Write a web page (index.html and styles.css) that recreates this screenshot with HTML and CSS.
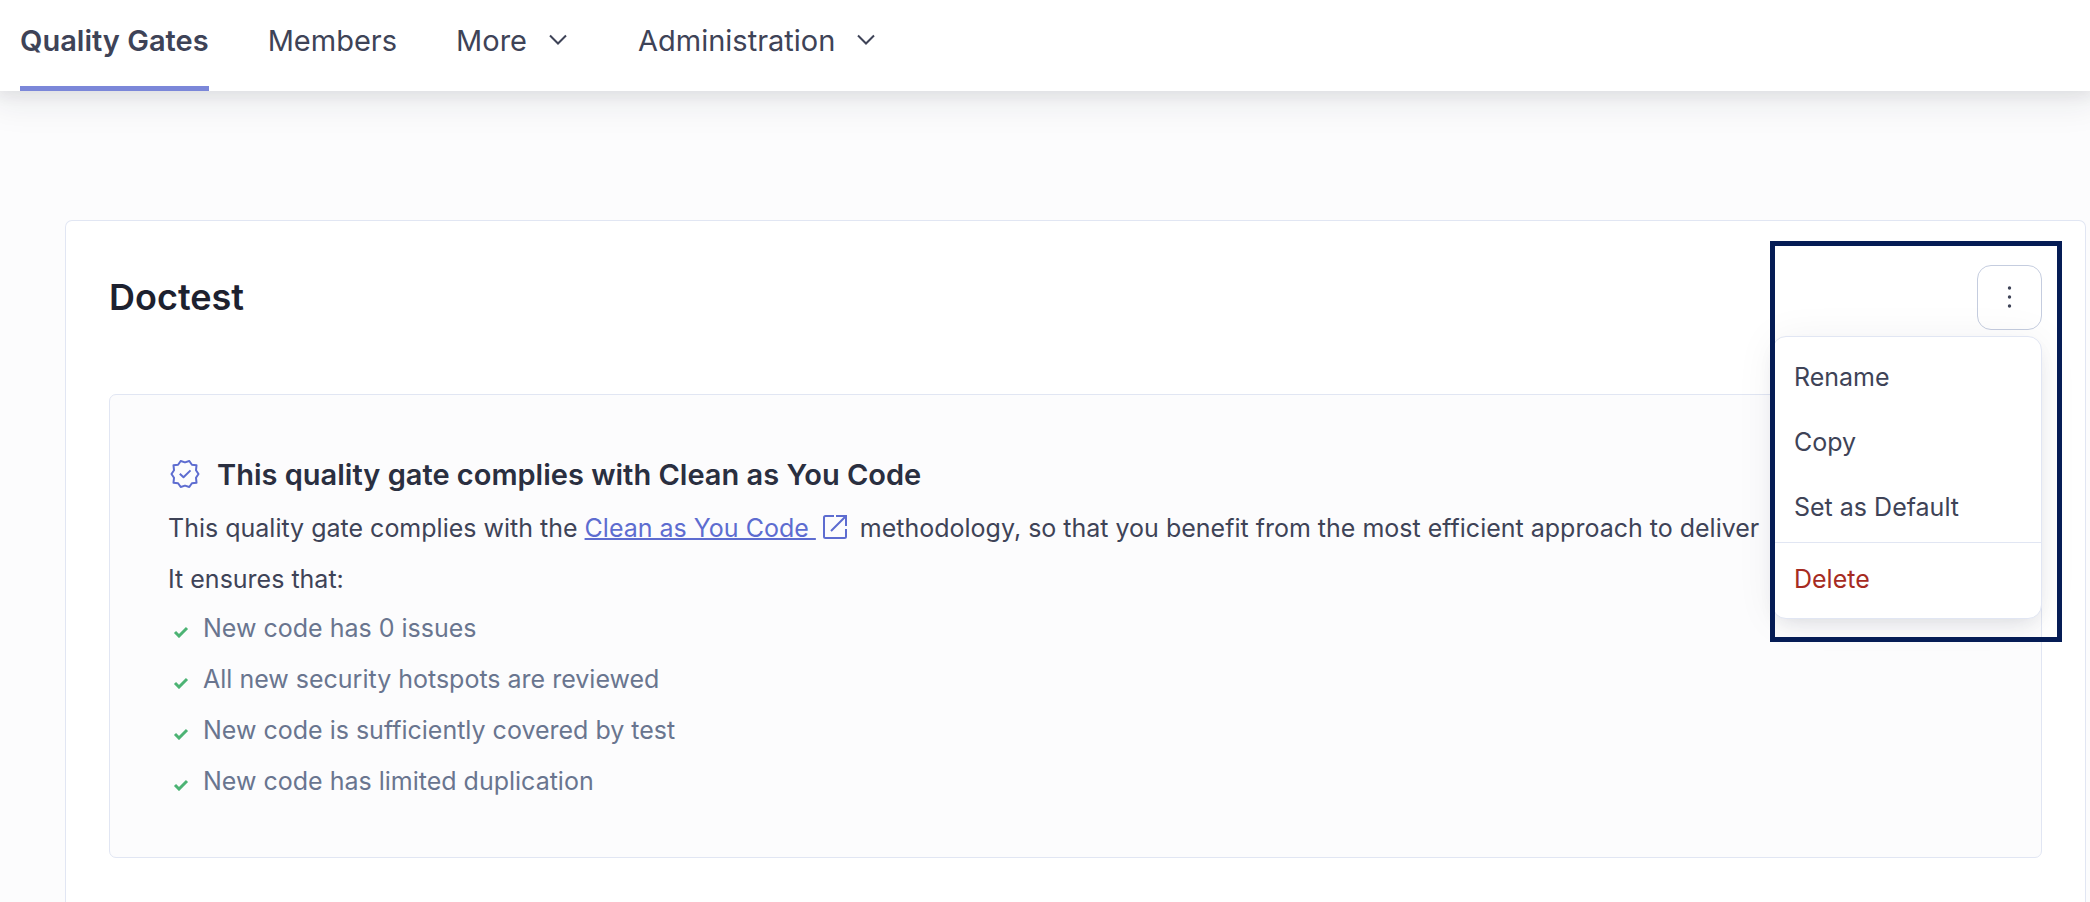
FILE: index.html
```
<!DOCTYPE html>
<html lang="en">
<head>
<meta charset="utf-8">
<title>Quality Gates</title>
<link rel="stylesheet" href="styles.css">
</head>
<body>
<nav class="navbar">
  <a class="nav-item active" href="#">Quality Gates</a>
  <a class="nav-item" href="#">Members</a>
  <button class="nav-item" type="button">More
    <svg class="chevron" viewBox="0 0 30 30" aria-hidden="true"><path d="M7 10.500 15 18.500l8-8"/></svg>
  </button>
  <button class="nav-item" type="button">Administration
    <svg class="chevron" viewBox="0 0 30 30" aria-hidden="true"><path d="M7 10.500 15 18.500l8-8"/></svg>
  </button>
</nav>
<main class="page">
  <section class="card">
    <header class="card-header">
      <h1 class="card-title">Doctest</h1>
      <div class="actions">
        <button class="menu-button" type="button" aria-label="Actions">
          <svg class="dots" viewBox="0 0 24 24" aria-hidden="true"><circle cx="11.500" cy="2" r="1.7"/><circle cx="11.500" cy="11" r="1.7"/><circle cx="11.500" cy="20" r="1.7"/></svg>
        </button>
        <div class="menu">
          <button class="menu-item" type="button">Rename</button>
          <button class="menu-item" type="button">Copy</button>
          <button class="menu-item" type="button">Set as Default</button>
          <hr class="menu-divider">
          <button class="menu-item danger" type="button">Delete</button>
        </div>
        <div class="highlight"></div>
      </div>
    </header>
    <div class="panel">
      <h2 class="panel-title">
        <svg class="seal" viewBox="0 0 30 30" aria-hidden="true"><path d="M28.500 14 26 10.200 26.500 5.300 21.900 4.700 19.300 1 15 2.400 10.700 1 8.100 4.700 3.500 5.300 4 10.200 1.500 14 4 17.800 3.500 22.700 8.100 23.300 10.700 27 15 25.600 19.300 27 21.900 23.300 26.500 22.700 26 17.800Z"/><path d="m9.800 13.800 3.700 3.400 7-6.800"/></svg>
        This quality gate complies with Clean as You Code
      </h2>
      <p class="text">This quality gate complies with the <a class="link" href="#">Clean as You Code&nbsp;</a><svg class="external" viewBox="0 0 26 26" aria-hidden="true"><path d="M12 2H3.500Q2 2 2 3.500v19Q2 24 3.500 24h19Q24 24 24 22.500V15M14 2h10v10M24 2 9 17"/></svg>methodology, so that you benefit from the most efficient approach to deliver</p>
      <p class="text">It ensures that:</p>
      <ul class="checks">
        <li class="check"><svg class="tick" viewBox="0 0 16 12" aria-hidden="true"><path d="m2 6 4 4 8-8"/></svg>New code has 0 issues</li>
        <li class="check"><svg class="tick" viewBox="0 0 16 12" aria-hidden="true"><path d="m2 6 4 4 8-8"/></svg>All new security hotspots are reviewed</li>
        <li class="check"><svg class="tick" viewBox="0 0 16 12" aria-hidden="true"><path d="m2 6 4 4 8-8"/></svg>New code is sufficiently covered by test</li>
        <li class="check"><svg class="tick" viewBox="0 0 16 12" aria-hidden="true"><path d="m2 6 4 4 8-8"/></svg>New code has limited duplication</li>
      </ul>
    </div>
  </section>
</main>
</body>
</html>
```
FILE: styles.css
```
* { box-sizing: border-box; }

body {
  margin: 0;
  height: 100vh;
  display: flex;
  flex-direction: column;
  overflow: hidden;
  background: #fcfcfd;
  color: #3e4357;
  font-family: Inter, "Liberation Sans", sans-serif;
  font-size: 25px;
}

button {
  font: inherit;
  color: inherit;
  background: none;
  border: 0;
  padding: 0;
  cursor: pointer;
}

.navbar {
  position: relative;
  flex: none;
  display: flex;
  gap: 59px;
  height: 91px;
  padding: 0 20px;
  background: #fff;
  box-shadow: 0 6px 32px 8px rgba(29, 33, 47, 0.08), 0 2px 12px 4px rgba(29, 33, 47, 0.06);
}

.nav-item {
  display: flex;
  align-items: center;
  gap: 16px;
  padding: 0 0 6px;
  border-bottom: 5px solid transparent;
  color: #3e4357;
  font-size: 29px;
  text-decoration: none;
}

.nav-item.active {
  border-color: #7b87d9;
  font-weight: 600;
}

.chevron {
  width: 30px;
  height: 30px;
  margin-right: 6px;
  fill: none;
  stroke: #3e4357;
  stroke-width: 2;
}

.page {
  flex: 1;
  display: flex;
  padding: 129px 4px 0 65px;
}

.card {
  flex: 1;
  padding: 44px 43px;
  background: #fff;
  border: 1px solid #e1e6f3;
  border-bottom: 0;
  border-radius: 7px 7px 0 0;
}

.card-header {
  display: flex;
  justify-content: space-between;
  align-items: center;
  margin-bottom: 64px;
}

.card-title {
  margin: 0;
  padding-bottom: 2px;
  color: #1d212f;
  font-size: 36px;
  font-weight: 600;
}

.actions { position: relative; }

.menu-button {
  display: flex;
  align-items: center;
  justify-content: center;
  width: 65px;
  height: 65px;
  border: 1px solid #c5cddf;
  border-radius: 14px;
  background: #fff;
}

.dots {
  width: 24px;
  height: 24px;
  fill: #3e4357;
}

.menu {
  position: absolute;
  top: 71px;
  right: 0;
  width: 270px;
  padding: 7px 0;
  background: #fff;
  border: 1px solid #e1e6f3;
  border-radius: 14px;
  box-shadow: 0 8px 20px -8px rgba(29, 33, 47, 0.14), 0 2px 40px rgba(29, 33, 47, 0.06);
}

.menu-item {
  display: block;
  width: 100%;
  height: 65px;
  padding: 0 21px;
  text-align: left;
}

.menu-item.danger { color: #a62b22; }

.menu-divider {
  margin: 3px 0;
  border: 0;
  border-top: 1px solid #e1e6f3;
}

.highlight {
  position: absolute;
  top: -24px;
  right: -20px;
  width: 292px;
  height: 401px;
  border: 5px solid #051c55;
  pointer-events: none;
}

.panel {
  padding: 58px 58px 50px;
  background: #fcfcfd;
  border: 1px solid #e1e6f3;
  border-radius: 7px;
}

.panel-title {
  display: flex;
  align-items: center;
  gap: 17px;
  margin: 0;
  padding-left: 2px;
  color: #2a2f40;
  font-size: 29px;
  font-weight: 600;
  line-height: 44px;
}

.seal {
  width: 30px;
  height: 30px;
  fill: none;
  stroke: #5d6cd0;
  stroke-width: 2;
  stroke-linejoin: round;
}

.text {
  margin: 0;
  line-height: 51px;
  white-space: nowrap;
}

.panel-title + .text { margin-top: 6px; }

.link { color: #5d6cd0; text-decoration-thickness: 2px; }

.external {
  width: 26px;
  height: 26px;
  margin: 0 12px 0 6px;
  vertical-align: -3px;
  fill: none;
  stroke: #5d6cd0;
  stroke-width: 2;
}

.checks {
  margin: -2px 0 0;
  padding: 0;
  list-style: none;
}

.check {
  display: flex;
  align-items: center;
  gap: 14px;
  padding-left: 5px;
  color: #69758f;
  line-height: 51px;
}

.tick {
  width: 16px;
  height: 12px;
  margin-top: 6px;
  fill: none;
  stroke: #4cb374;
  stroke-width: 3;
}
```
